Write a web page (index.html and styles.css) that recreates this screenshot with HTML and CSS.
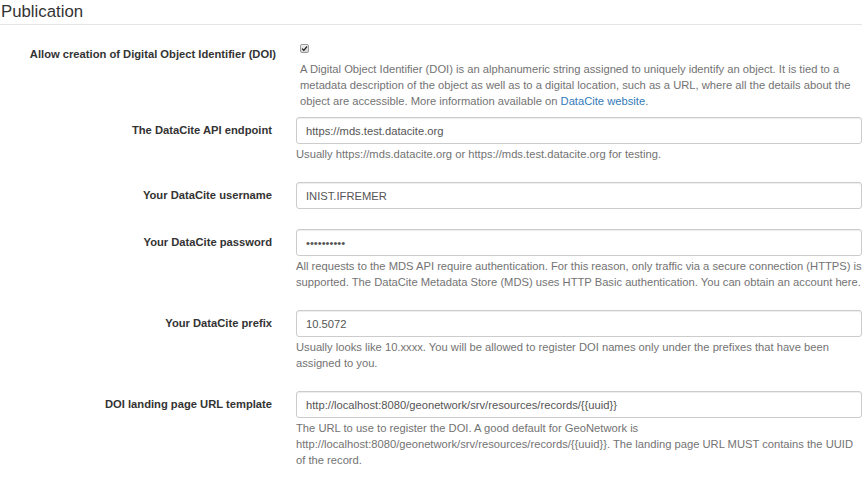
FILE: index.html
```html
<!DOCTYPE html>
<html lang="en">
<head>
<meta charset="utf-8">
<title>Publication</title>
<link rel="stylesheet" href="styles.css">
</head>
<body>
<div class="page">
  <div class="legend">Publication</div>

  <div class="form-group group-first">
    <label class="control-label label-wide">Allow creation of Digital Object Identifier (DOI)</label>
    <div class="control">
      <div class="checkbox-line"><span class="checkbox"><svg viewBox="0 0 10 10" width="7" height="7"><path d="M1.5 5.2 L4 7.6 L8.6 2.2" fill="none" stroke="#222" stroke-width="1.9"/></svg></span></div>
      <p class="help help-desc">A Digital Object Identifier (DOI) is an alphanumeric string assigned to uniquely identify an object. It is tied to a metadata description of the object as well as to a digital location, such as a URL, where all the details about the object are accessible. More information available on <a href="#" class="link">DataCite website</a>.</p>
    </div>
  </div>

  <div class="form-group">
    <label class="control-label">The DataCite API endpoint</label>
    <div class="control">
      <input class="input" type="text" value="https://mds.test.datacite.org">
      <p class="help">Usually https://mds.datacite.org or https://mds.test.datacite.org for testing.</p>
    </div>
  </div>

  <div class="form-group">
    <label class="control-label">Your DataCite username</label>
    <div class="control">
      <input class="input" type="text" value="INIST.IFREMER">
    </div>
  </div>

  <div class="form-group">
    <label class="control-label">Your DataCite password</label>
    <div class="control">
      <input class="input" type="password" value="abcdefghij">
      <p class="help">All requests to the MDS API require authentication. For this reason, only traffic via a secure connection (HTTPS) is supported. The DataCite Metadata Store (MDS) uses HTTP Basic authentication. You can obtain an account here.</p>
    </div>
  </div>

  <div class="form-group">
    <label class="control-label">Your DataCite prefix</label>
    <div class="control">
      <input class="input" type="text" value="10.5072">
      <p class="help">Usually looks like 10.xxxx. You will be allowed to register DOI names only under the prefixes that have been assigned to you.</p>
    </div>
  </div>

  <div class="form-group">
    <label class="control-label">DOI landing page URL template</label>
    <div class="control">
      <input class="input" type="text" value="http://localhost:8080/geonetwork/srv/resources/records/{{uuid}}">
      <p class="help">The URL to use to register the DOI. A good default for GeoNetwork is http://localhost:8080/geonetwork/srv/resources/records/{{uuid}}. The landing page URL MUST contains the UUID of the record.</p>
    </div>
  </div>
</div>
</body>
</html>
```

FILE: styles.css
```css
html, body {
  margin: 0;
  padding: 0;
  background: #ffffff;
}

body {
  font-family: "Liberation Sans", Arial, sans-serif;
  font-size: 11.2px;
  line-height: 16px;
  color: #333333;
}

.page {
  width: 862px;
}

.legend {
  font-size: 16.8px;
  line-height: 24px;
  color: #333333;
  padding-left: 1px;
  border-bottom: 1px solid #e5e5e5;
  margin-bottom: 15px;
}

.form-group {
  display: grid;
  grid-template-columns: 272px 566px;
  column-gap: 24px;
  margin-bottom: 20px;
}

.group-first {
  margin-bottom: 8px;
}

.control-label {
  font-weight: bold;
  text-align: right;
  padding-top: 5px;
  color: #333333;
}

.label-wide {
  padding-top: 6px;
  margin-right: -4px;
}

.control {
  min-width: 0;
}

.checkbox-line {
  height: 21px;
  padding-left: 4px;
  box-sizing: border-box;
  padding-top: 4px;
}

.checkbox {
  display: flex;
  align-items: center;
  justify-content: center;
  width: 9px;
  height: 9px;
  box-sizing: border-box;
  border: 1px solid #9a9a9a;
  border-radius: 2px;
  background: linear-gradient(#f0f0f0, #d6d6d6);
}

.input {
  display: block;
  width: 100%;
  height: 27px;
  box-sizing: border-box;
  margin: 0;
  padding: 0 9px;
  border: 1px solid #cccccc;
  border-radius: 3px;
  box-shadow: inset 0 1px 1px rgba(0, 0, 0, 0.075);
  font-family: "Liberation Sans", Arial, sans-serif;
  font-size: 11.2px;
  color: #555555;
  background: #ffffff;
  outline: none;
}

.help {
  margin: 2px 0 0 0;
  color: #737373;
}

.help-desc {
  margin-top: 0;
  padding-left: 4px;
}

.link {
  color: #337ab7;
  text-decoration: none;
}
```
